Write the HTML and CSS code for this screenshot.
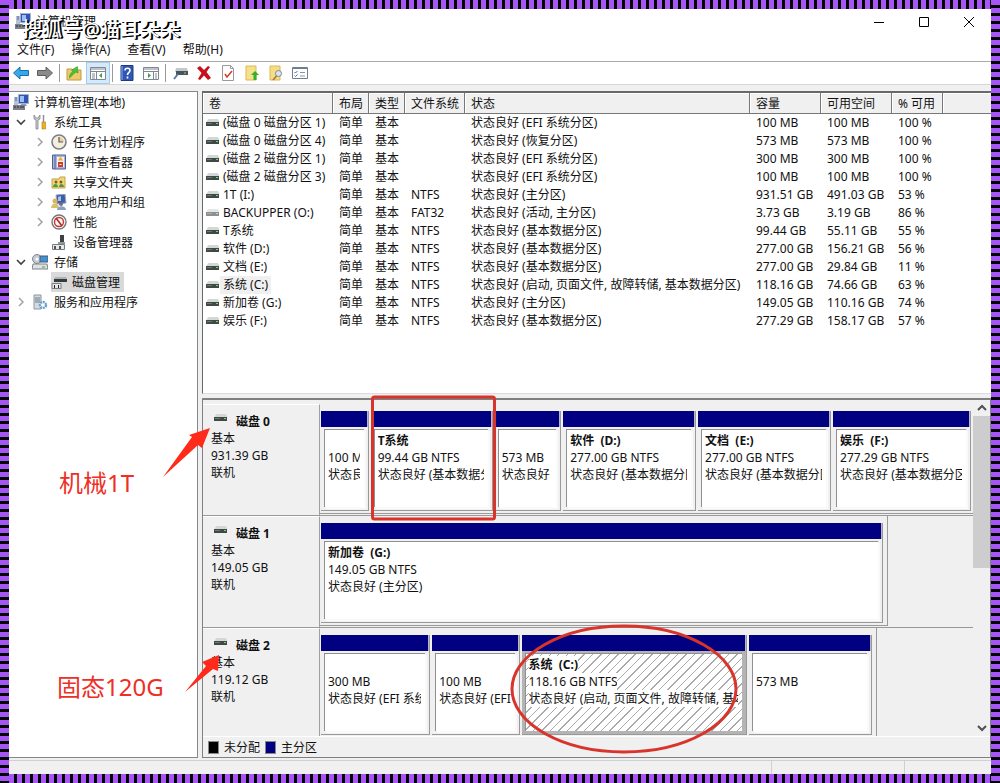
FILE: index.html
```html
<!DOCTYPE html>
<html lang="zh-CN">
<head>
<meta charset="utf-8">
<title>计算机管理</title>
<link rel="stylesheet" href="styles.css">
</head>
<body>
<svg class="defs" aria-hidden="true">
  <symbol id="disk" viewBox="0 0 14 10"><path d="M2 1h10l1.500 3H.5z" fill="#d3d7d5"/><rect x="0" y="4" width="13" height="4" fill="#3f4a45"/><rect x="1" y="5" width="5" height="1" fill="#6b7771"/><rect x="10" y="5" width="2" height="1" fill="#7fd08b"/></symbol>
  <symbol id="pc" viewBox="0 0 16 16"><rect x="5.500" y=".5" width="10" height="9" fill="#2f55b8" stroke="#a9b4cc"/><path d="M7 2h4v6H7z" fill="#9cc0f5"/><path d="M8 10h5l1 2H7z" fill="#9a9fae"/><path d="M1 3h4v8H1z" fill="#b6c0d6"/><path d="M2 4h2M2 6h2" stroke="#546a9a"/><rect x="0" y="11" width="12" height="5" fill="#7d828a"/><path d="M1 13h2m1 0h2m1 0h4" stroke="#30353c"/></symbol>
  <symbol id="open" viewBox="0 0 10 10"><path d="M1 3l4 4 4-4" fill="none" stroke="#404040" stroke-width="1.600"/></symbol>
  <symbol id="shut" viewBox="0 0 10 10"><path d="M3 1l4 4-4 4" fill="none" stroke="#a3a3a3" stroke-width="1.500"/></symbol>
</svg>

<div class="window">
  <header class="titlebar">
    <svg class="i16"><use href="#pc"/></svg>
    <h1>计算机管理</h1>
    <div class="winbtns">
      <button aria-label="最小化"><svg viewBox="0 0 12 12"><path d="M1 6.500h10"/></svg></button>
      <button aria-label="最大化"><svg viewBox="0 0 12 12"><path d="M1.500 1.500h9v9h-9z"/></svg></button>
      <button aria-label="关闭"><svg viewBox="0 0 12 12"><path d="M1 1l10 10M11 1L1 11"/></svg></button>
    </div>
    <div class="watermark">搜狐号@猫耳朵朵</div>
  </header>
  <nav class="menu"><button>文件(F)</button><button>操作(A)</button><button>查看(V)</button><button>帮助(H)</button></nav>
  <div class="toolbar">
    <button aria-label="后退"><svg viewBox="0 0 16 16"><path d="M.5 8L7 2v3.500h8.500v5H7V14z" fill="#39a9e6" stroke="#1b6fa8"/></svg></button>
    <button aria-label="前进"><svg viewBox="0 0 16 16"><path d="M15.500 8L9 2v3.500H.5v5H9V14z" fill="#8b8b8b" stroke="#5e5e5e"/></svg></button>
    <i class="sep"></i>
    <button aria-label="向上"><svg viewBox="0 0 16 16"><path d="M1 4h5l1 1h8v10H1z" fill="#efc96a" stroke="#c39a3a"/><path d="M3.500 13c0-5 2-5.500 3.500-6L5.500 5l6-3.500L12 8l-2-1c-2 1-3 3-6.500 6z" fill="#4cc13c" stroke="#2b8a24" stroke-width=".5"/></svg></button>
    <button class="on" aria-label="显示树"><svg viewBox="0 0 16 16"><path d="M.5 2.500h15v12H.5z" fill="#fff" stroke="#7c8894"/><path d="M1 4h14M1 6.500h14M6.500 7v7" stroke="#7c8894"/><path d="M2 9h3M2 11h3M2 13h3" stroke="#7c8894"/><path d="M12 8v5L9 10.500z" fill="#3f9f46"/></svg></button>
    <i class="sep"></i>
    <button aria-label="帮助"><svg viewBox="0 0 16 16"><path d="M2 .5h12v15H2z" fill="#2f55b5" stroke="#1d3a86"/><path d="M3 1v14" stroke="#8fb0ee"/><path d="M6 5.500C6 2.500 11 2.500 11 5.500c0 2-2.500 2-2.500 4.500M8.500 11.500v2" fill="none" stroke="#fff" stroke-width="1.600"/></svg></button>
    <button aria-label="操作窗格"><svg viewBox="0 0 16 16"><path d="M.5 2.500h15v12H.5z" fill="#fff" stroke="#7c8894"/><path d="M1 4h14M1 6.500h14M10.500 7v7" stroke="#7c8894"/><path d="M12 9h2M12 11h2M12 13h2" stroke="#7c8894"/><path d="M5 8v5l3-2.500z" fill="#3f9f46"/></svg></button>
    <i class="sep"></i>
    <button aria-label="连接"><svg viewBox="0 0 16 16"><path d="M4 3h11l1 4H3z" fill="#c3c8ca"/><path d="M4 6h12v4H4z" fill="#4a5558"/><path d="M12 8h2" stroke="#6fe07c"/><path d="M6 9l-4 5" stroke="#5578a8" stroke-width="2"/></svg></button>
    <button aria-label="删除"><svg viewBox="0 0 16 16"><path d="M1 3l3-2 4 4 4-4 2 1-3.500 5L15 13l-3 2-4-4.500L4 15l-2-1 3.500-6z" fill="#c8101a"/></svg></button>
    <button aria-label="属性"><svg viewBox="0 0 16 16"><path d="M2.500.5h8l3 3v12h-11z" fill="#fff" stroke="#9a9a9a"/><path d="M10.500.5v3h3" fill="none" stroke="#9a9a9a"/><path d="M5 9l2 3 5-6" fill="none" stroke="#d23b2c" stroke-width="1.500"/></svg></button>
    <button aria-label="上移"><svg viewBox="0 0 16 16"><path d="M2 1h10v14H2z" fill="#f7e08c" stroke="#d9b957"/><path d="M11 6l4 4h-2.500v5h-3v-5H7z" fill="#35b02c"/></svg></button>
    <button aria-label="查找"><svg viewBox="0 0 16 16"><path d="M2 1h10v14H2z" fill="#f7dc86" stroke="#d9b957"/><circle cx="10.500" cy="8.500" r="3" fill="#d8e6f2" stroke="#7a8794"/><path d="M8.500 11L5 15" stroke="#a5793b" stroke-width="1.600"/></svg></button>
    <button aria-label="选项"><svg viewBox="0 0 16 16"><path d="M.5 2.500h15v11H.5z" fill="#fff" stroke="#6f7f90"/><path d="M1 3.500h14" stroke="#6f7f90"/><path d="M2.500 7l1 1 2-2M2.500 10.500l1 1 2-2" fill="none" stroke="#3a6fc4"/><path d="M8 7.500h5M8 11h5" stroke="#8a95a0"/></svg></button>
  </div>

  <div class="panes">
    <aside class="tree">
      <ul>
        <li class="root"><svg class="i16"><use href="#pc"/></svg>计算机管理(本地)</li>
        <li class="l1"><svg class="chev"><use href="#open"/></svg><svg class="i16" viewBox="0 0 16 16"><path d="M2 1v4l2 1v9h2V6l2-1V1L6 4H4z" fill="#c8ccd0" stroke="#74797e" stroke-width=".7"/><path d="M11.500 1v7" stroke="#8c9196" stroke-width="1.500"/><path d="M10 8h3.500v7H10z" fill="#edb021" stroke="#b77e0d" stroke-width=".6"/></svg>系统工具</li>
        <li class="l2"><svg class="chev"><use href="#shut"/></svg><svg class="i16" viewBox="0 0 16 16"><circle cx="8" cy="8" r="7" fill="#f4eedd" stroke="#7b7f86" stroke-width="1.600"/><path d="M8 8V3a5 5 0 0 1 5 5z" fill="#f2cf94"/><path d="M8 3v5h4" fill="none" stroke="#4c5c72" stroke-width="1.200"/></svg>任务计划程序</li>
        <li class="l2"><svg class="chev"><use href="#shut"/></svg><svg class="i16" viewBox="0 0 16 16"><path d="M1.500 1h13v14h-13z" fill="#a9b7dd" stroke="#4d5f94"/><path d="M4 1v14" stroke="#4d5f94"/><path d="M6 3h7v10H6z" fill="#f5f0ea"/><path d="M7 8h5v5H7z" fill="#d8372b"/><path d="M9.500 2.500l2.500 4H7z" fill="#eda72c"/><path d="M8.500 10.500h2" stroke="#fff"/></svg>事件查看器</li>
        <li class="l2"><svg class="chev"><use href="#shut"/></svg><svg class="i16" viewBox="0 0 16 16"><path d="M1 5h7l1-2h5v11H1z" fill="#f3d777" stroke="#c6a13e"/><circle cx="5" cy="8" r="1.500" fill="#7a5b2c"/><circle cx="10" cy="8" r="1.500" fill="#7a5b2c"/><path d="M2 13c0-4 5-4 5 0z" fill="#3da34a"/><path d="M8 13c0-4 5-4 5 0z" fill="#5b8f52"/></svg>共享文件夹</li>
        <li class="l2"><svg class="chev"><use href="#shut"/></svg><svg class="i16" viewBox="0 0 16 16"><path d="M5 1l9-1 1 9-9 1z" fill="#3c5eaa" stroke="#9ca7c4"/><path d="M7 3l3-1v5H7z" fill="#a5c3f1"/><circle cx="4" cy="7" r="2.500" fill="#dfb25d"/><path d="M0 14c0-6 8-6 8 0z" fill="#d5c36a"/><circle cx="10" cy="10" r="2" fill="#6c6f76"/><path d="M6 16c0-5 9-5 9 0z" fill="#8aa0c9"/></svg>本地用户和组</li>
        <li class="l2"><svg class="chev"><use href="#shut"/></svg><svg class="i16" viewBox="0 0 16 16"><circle cx="8" cy="8" r="7" fill="#fbf7f4" stroke="#77777b" stroke-width="1.400"/><circle cx="8" cy="8" r="4.500" fill="none" stroke="#c03a38" stroke-width="1.400"/><path d="M5 4l6 8" stroke="#b7282b" stroke-width="1.600"/></svg>性能</li>
        <li class="l2"><i class="chev"></i><svg class="i16" viewBox="0 0 16 16"><path d="M9 1h4v7H9z" fill="#3d4245"/><path d="M7 8h7v2H7z" fill="#92979a"/><path d="M1.500 10.500h12v5h-12z" fill="#e6e8ea" stroke="#777c80"/><path d="M4 12v3m5-3v3" stroke="#222" stroke-width="1.500"/></svg>设备管理器</li>
        <li class="l1"><svg class="chev"><use href="#open"/></svg><svg class="i16" viewBox="0 0 16 16"><circle cx="5" cy="5" r="4.500" fill="#c4cbd3" stroke="#7c858f"/><circle cx="5" cy="5" r="1.500" fill="#fff"/><path d="M8 2h8v6H8z" fill="#3d93d1" stroke="#557"/><path d="M1 10h14l1 5H0z" fill="#dfe2e5" stroke="#7d8388"/><path d="M10 13h3" stroke="#3aa645"/></svg>存储</li>
        <li class="l2"><i class="chev"></i><span class="selected"><svg class="i16" viewBox="0 0 16 16"><path d="M4 3h11l1 2H3z" fill="#aeb3b4"/><path d="M3 5h13v3H3z" fill="#343b3c"/><path d="M1 9.500h9v5H1z" fill="#e6e8ea" stroke="#777c80"/><path d="M3.500 11v3m4-3v3" stroke="#222"/></svg>磁盘管理</span></li>
        <li class="l1"><svg class="chev"><use href="#shut"/></svg><svg class="i16" viewBox="0 0 16 16"><path d="M2 1h7v14H2z" fill="#d4dae0" stroke="#8d969e"/><path d="M3 4h5M3 6h5M3 8h5" stroke="#6d7a86"/><circle cx="11" cy="11" r="3" fill="#fff" stroke="#6f9ed1" stroke-width="2.400" stroke-dasharray="2 .7"/></svg>服务和应用程序</li>
      </ul>
    </aside>

    <main class="content">
      <section class="volumes">
        <table>
          <colgroup><col class="c-name"><col class="c-s"><col class="c-s"><col class="c-fs"><col class="c-status"><col class="c-size"><col class="c-size"><col class="c-pct"><col></colgroup>
          <thead><tr><th>卷</th><th>布局</th><th>类型</th><th>文件系统</th><th>状态</th><th>容量</th><th>可用空间</th><th>% 可用</th><th></th></tr></thead>
          <tbody>
            <tr><td><svg class="dk"><use href="#disk"/></svg><span>(磁盘 0 磁盘分区 1)</span></td><td>简单</td><td>基本</td><td></td><td>状态良好 (EFI 系统分区)</td><td>100 MB</td><td>100 MB</td><td>100 %</td><td></td></tr>
            <tr><td><svg class="dk"><use href="#disk"/></svg><span>(磁盘 0 磁盘分区 4)</span></td><td>简单</td><td>基本</td><td></td><td>状态良好 (恢复分区)</td><td>573 MB</td><td>573 MB</td><td>100 %</td><td></td></tr>
            <tr><td><svg class="dk"><use href="#disk"/></svg><span>(磁盘 2 磁盘分区 1)</span></td><td>简单</td><td>基本</td><td></td><td>状态良好 (EFI 系统分区)</td><td>300 MB</td><td>300 MB</td><td>100 %</td><td></td></tr>
            <tr><td><svg class="dk"><use href="#disk"/></svg><span>(磁盘 2 磁盘分区 3)</span></td><td>简单</td><td>基本</td><td></td><td>状态良好 (EFI 系统分区)</td><td>100 MB</td><td>100 MB</td><td>100 %</td><td></td></tr>
            <tr><td><svg class="dk"><use href="#disk"/></svg><span>1T (I:)</span></td><td>简单</td><td>基本</td><td>NTFS</td><td>状态良好 (主分区)</td><td>931.51 GB</td><td>491.03 GB</td><td>53 %</td><td></td></tr>
            <tr><td><svg class="dk pale"><use href="#disk"/></svg><span>BACKUPPER (O:)</span></td><td>简单</td><td>基本</td><td>FAT32</td><td>状态良好 (活动, 主分区)</td><td>3.73 GB</td><td>3.19 GB</td><td>86 %</td><td></td></tr>
            <tr><td><svg class="dk"><use href="#disk"/></svg><span>T系统</span></td><td>简单</td><td>基本</td><td>NTFS</td><td>状态良好 (基本数据分区)</td><td>99.44 GB</td><td>55.11 GB</td><td>55 %</td><td></td></tr>
            <tr><td><svg class="dk"><use href="#disk"/></svg><span>软件 (D:)</span></td><td>简单</td><td>基本</td><td>NTFS</td><td>状态良好 (基本数据分区)</td><td>277.00 GB</td><td>156.21 GB</td><td>56 %</td><td></td></tr>
            <tr><td><svg class="dk"><use href="#disk"/></svg><span>文档 (E:)</span></td><td>简单</td><td>基本</td><td>NTFS</td><td>状态良好 (基本数据分区)</td><td>277.00 GB</td><td>29.84 GB</td><td>11 %</td><td></td></tr>
            <tr><td><svg class="dk"><use href="#disk"/></svg><span class="picked">系统 (C:)</span></td><td>简单</td><td>基本</td><td>NTFS</td><td>状态良好 (启动, 页面文件, 故障转储, 基本数据分区)</td><td>118.16 GB</td><td>74.66 GB</td><td>63 %</td><td></td></tr>
            <tr><td><svg class="dk"><use href="#disk"/></svg><span>新加卷 (G:)</span></td><td>简单</td><td>基本</td><td>NTFS</td><td>状态良好 (主分区)</td><td>149.05 GB</td><td>110.16 GB</td><td>74 %</td><td></td></tr>
            <tr><td><svg class="dk"><use href="#disk"/></svg><span>娱乐 (F:)</span></td><td>简单</td><td>基本</td><td>NTFS</td><td>状态良好 (基本数据分区)</td><td>277.29 GB</td><td>158.17 GB</td><td>57 %</td><td></td></tr>
          </tbody>
        </table>
      </section>

      <section class="graph">
        <div class="scroller">
          <div class="disks">
            <div class="disk">
              <div class="info"><h2><svg class="dk"><use href="#disk"/></svg>磁盘 0</h2><p>基本</p><p>931.39 GB</p><p>联机</p></div>
              <div class="track"><div class="strip" style="width:100%">
                <div class="part" style="flex-grow:47"><div class="box"><b></b><p>100 MB</p><p>状态良好 (EFI 系统分区)</p></div></div>
                <div class="part" style="flex-grow:122"><div class="box"><b>T系统</b><p>99.44 GB NTFS</p><p>状态良好 (基本数据分区)</p></div></div>
                <div class="part" style="flex-grow:66"><div class="box"><b></b><p>573 MB</p><p>状态良好 (恢复分区)</p></div></div>
                <div class="part" style="flex-grow:133"><div class="box"><b>软件&nbsp; (D:)</b><p>277.00 GB NTFS</p><p>状态良好 (基本数据分区)</p></div></div>
                <div class="part" style="flex-grow:133"><div class="box"><b>文档&nbsp; (E:)</b><p>277.00 GB NTFS</p><p>状态良好 (基本数据分区)</p></div></div>
                <div class="part" style="flex-grow:138"><div class="box"><b>娱乐&nbsp; (F:)</b><p>277.29 GB NTFS</p><p>状态良好 (基本数据分区)</p></div></div>
              </div></div>
            </div>
            <div class="disk">
              <div class="info"><h2><svg class="dk"><use href="#disk"/></svg>磁盘 1</h2><p>基本</p><p>149.05 GB</p><p>联机</p></div>
              <div class="track"><div class="strip" style="width:87%">
                <div class="part" style="flex-grow:1"><div class="box"><b>新加卷&nbsp; (G:)</b><p>149.05 GB NTFS</p><p>状态良好 (主分区)</p></div></div>
              </div></div>
            </div>
            <div class="disk">
              <div class="info"><h2><svg class="dk"><use href="#disk"/></svg>磁盘 2</h2><p>基本</p><p>119.12 GB</p><p>联机</p></div>
              <div class="track"><div class="strip" style="width:85.300%">
                <div class="part" style="flex-grow:109"><div class="box"><b></b><p>300 MB</p><p>状态良好 (EFI 系统分区)</p></div></div>
                <div class="part" style="flex-grow:87"><div class="box"><b></b><p>100 MB</p><p>状态良好 (EFI 系统分区)</p></div></div>
                <div class="part current" style="flex-grow:226"><div class="box"><b>系统&nbsp; (C:)</b><p>118.16 GB NTFS</p><p>状态良好 (启动, 页面文件, 故障转储, 基本数据分区)</p></div></div>
                <div class="part" style="flex-grow:123"><div class="box"><b></b><p>573 MB</p></div></div>
              </div></div>
            </div>
          </div>
          <div class="scrollbar">
            <button aria-label="向上滚动"><svg viewBox="0 0 10 10"><path d="M1 7l4-4 4 4"/></svg></button>
            <div class="thumb"></div>
            <button aria-label="向下滚动"><svg viewBox="0 0 10 10"><path d="M1 3l4 4 4-4"/></svg></button>
          </div>
        </div>
        <div class="legend"><i class="black"></i>未分配<i class="navy"></i>主分区</div>
      </section>
    </main>
  </div>
  <footer class="status"><span></span><span></span><span></span></footer>
</div>

<svg class="marks" width="1000" height="783" aria-hidden="true">
  <rect x="372.500" y="397" width="122" height="122" rx="2" fill="none" stroke="#d8342c" stroke-width="3"/>
  <ellipse cx="624" cy="689" rx="112" ry="63" fill="none" stroke="#d8342c" stroke-width="3"/>
  <path d="M163 477l29-40-3-2 21-7-8 20-4-3z" fill="#ff2a1a"/>
  <path d="M185 692l21-26-4-4 17-7-1 16-5-2z" fill="#ff2a1a"/>
</svg>
<div class="note hdd">机械1T</div>
<div class="note ssd">固态120G</div>
</body>
</html>
```
FILE: styles.css
```css
* { box-sizing: border-box; }

body {
  margin: 0;
  height: 100vh;
  padding: 9px;
  position: relative;
  overflow: hidden;
  font: 12px/17px "Noto Sans", "Noto Sans CJK SC", sans-serif;
  color: #111;
  background:
    repeating-linear-gradient(90deg, #a855f7 0 5px, #000 5px 8px) 9px 0 / calc(100% - 18px) 9px no-repeat,
    repeating-linear-gradient(90deg, #a855f7 0 5px, #000 5px 8px) 9px 100% / calc(100% - 18px) 9px no-repeat,
    repeating-linear-gradient(#a855f7 0 5px, #000 5px 8px);
}

h1, h2, p, ul { margin: 0; padding: 0; font-size: 12px; }
button { border: 0; padding: 0; background: none; font: inherit; color: inherit; }
svg { display: block; }
.defs { position: absolute; width: 0; height: 0; }
.i16 { width: 16px; height: 16px; flex: none; }
.dk { width: 14px; height: 10px; flex: none; }
.pale { opacity: .6; }

.window { height: 100%; display: flex; flex-direction: column; background: #fff; }

.titlebar { position: relative; display: flex; height: 31px; padding: 4px 0 0 6px; gap: 5px; align-items: flex-start; }
.titlebar h1 { font-weight: 400; }
.winbtns { margin-left: auto; display: flex; }
.winbtns button { width: 45px; height: 18px; display: grid; place-items: center; }
.winbtns svg { width: 12px; height: 12px; fill: none; stroke: #000; }
.watermark {
  position: absolute;
  left: 13px;
  top: 7px;
  font-size: 20px;
  line-height: 28px;
  font-weight: 500;
  color: #fff;
  text-shadow: 1px 1px 0 #000, 2px 1px 0 #000;
}

.menu { display: flex; height: 21px; gap: 1px; }
.menu button { padding: 0 8px; line-height: 17px; height: 18px; }

.toolbar { display: flex; align-items: center; height: 24px; border-top: 1px solid #a9a9a9; border-bottom: 1px solid #d6d6d6; }
.toolbar button { width: 24px; height: 22px; display: grid; place-items: center; }
.toolbar svg { width: 16px; height: 16px; }
.toolbar .on { background: #d5e9f9; box-shadow: inset 0 0 0 1px #a3cdf0; }
.sep { width: 1px; height: 18px; margin: 0 2px; background: #9a9a9a; }

.panes { flex: 1; min-height: 0; display: flex; gap: 4px; padding-top: 6px; background: #f0f0f0; }
.tree { width: 189px; flex: none; background: #fff; border: solid #828790; border-width: 1px 1px 1px 0; }
.tree ul { list-style: none; }
.tree li { display: flex; align-items: center; height: 20px; gap: 5px; }
.tree .chev { width: 10px; height: 10px; flex: none; }
.tree .root { padding-left: 4px; }
.tree .l1 { padding-left: 7px; gap: 6px; }
.tree .l2 { padding-left: 26px; gap: 6px; }
.selected { display: flex; align-items: center; gap: 5px; height: 20px; padding-right: 4px; background: #d9d9d9; }

.content { flex: 1; min-width: 0; display: flex; flex-direction: column; gap: 4px; }
.volumes { flex: 1; min-height: 0; overflow: hidden; background: #fff; border: solid #696969; border-width: 2px 0 0 1px; border-bottom: 1px solid #dcdcdc; }
table { width: 100%; table-layout: fixed; border-collapse: separate; border-spacing: 0; }
.c-name { width: 130px; }
.c-s { width: 36px; }
.c-fs { width: 60px; }
.c-status { width: 285px; }
.c-size { width: 71px; }
.c-pct { width: 51px; }
th { height: 21px; padding: 0 0 0 6px; text-align: left; font-weight: 400; white-space: nowrap; background: #f0f0f0; border-right: 1px solid #777; border-bottom: 1px solid #777; box-shadow: inset 1px 1px #fff; }
th:last-child { border-right: 0; }
td { height: 18px; padding: 0 0 0 6px; line-height: 18px; white-space: nowrap; }
td:first-child { display: flex; align-items: center; padding-left: 3px; }
td:first-child span { padding: 0 3px; }
.picked { background: #f0f0f0; }

.graph { flex: none; background: #f0f0f0; border: solid #808080; border-width: 2px 1px 1px 1px; }
.scroller { display: flex; height: 336px; }
.disks { flex: 1; min-width: 0; padding-top: 4px; overflow: hidden; }
.disk { display: flex; height: 112px; border-bottom: 1px solid #999; }
.info { width: 117px; flex: none; padding: 8px 8px 0 8px; border-top: 1px solid #fff; border-right: 1px solid #a0a0a0; }
.info h2 { display: flex; gap: 8px; padding-left: 3px; }
.track { flex: 1; min-width: 0; }
.strip { display: flex; gap: 2px; height: 110px; padding: 7px 4px 2px 1px; border-right: 1px solid #999; border-bottom: 1px solid #999; }
.disk:first-child .strip { padding-right: 2px; border-right: 0; }
.part { flex: 1 1 0; min-width: 0; display: flex; flex-direction: column; border-right: 1px solid #999; border-bottom: 1px solid #999; }
.part::before { content: ""; height: 16px; flex: none; background: #000080; border-right: 1px solid #b8b8c8; }
.box { flex: 1; min-height: 0; margin: 2px 4px 3px 3px; padding: 2px 4px 0 3px; background: #fff; border: solid #909090; border-width: 1px 0 0 1px; box-shadow: 2px 2px #fafafa; }
.box b, .box p { display: block; height: 17px; overflow: hidden; white-space: nowrap; }
.current { background: #b4b4b4; }
.current .box { background: repeating-linear-gradient(135deg, #fff 0 5px, #aaa 5px 6px); box-shadow: none; }
.current b, .current p { width: fit-content; max-width: 100%; background: #fff; }

.scrollbar { width: 17px; flex: none; display: flex; flex-direction: column; background: #f0f0f0; }
.scrollbar button { height: 16px; display: grid; place-items: center; }
.scrollbar svg { width: 10px; height: 10px; fill: none; stroke: #505050; stroke-width: 2; }
.thumb { height: 152px; margin-bottom: auto; background: #cdcdcd; }
.legend { display: flex; align-items: center; gap: 5px; height: 21px; padding-left: 5px; border-top: 1px solid #fff; }
.legend i { width: 11px; height: 13px; border: 1px solid #888; }
.black { background: #000; }
.navy { background: #000080; }

.status { display: flex; height: 16px; padding-top: 2px; background: #f0f0f0; }
.status span { border-right: 1px solid #d0d0d0; border-top: 1px solid #d0d0d0; width: 133px; }
.status span:first-child { flex: 1; }
.status span:last-child { width: 86px; border-right: 0; }

.marks { position: absolute; left: 0; top: 0; }
.note { position: absolute; font-size: 24px; line-height: 32px; color: #ee2f26; }
.hdd { left: 59px; top: 467px; }
.ssd { left: 57px; top: 671px; }
```
